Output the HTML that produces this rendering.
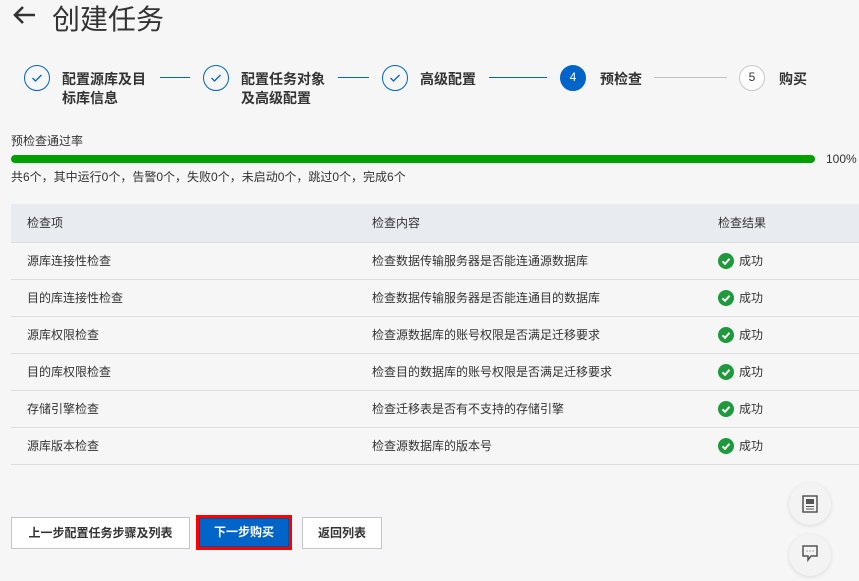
<!DOCTYPE html>
<html><head><meta charset="utf-8"><style>
*{margin:0;padding:0;box-sizing:border-box}
body{width:859px;height:566px;overflow:hidden;background:#f6f6f6;font-family:"Liberation Sans","Noto Sans CJK SC",sans-serif;color:#333;position:relative}
.a{position:absolute}
.title{left:52px;top:-2px;font-size:28px;color:#333;font-weight:400}
.c{width:26px;height:26px;border-radius:50%;border:1.5px solid #0064c8;color:#0064c8;text-align:center;font-size:12px;line-height:23px}
.lbl{font-size:14px;font-weight:bold;color:#333;line-height:19px}
.ln{height:1px;background:#0064c8;top:77px}
.t{font-size:12px;color:#333}
.row{left:11px;width:848px;height:37px;border-bottom:1px solid #ddd;font-size:12px;line-height:37px}
.row span{position:absolute}
.ok{display:inline-block;width:16px;height:16px;border-radius:50%;background:#1e9a3c;vertical-align:middle;margin-right:5px;position:relative;top:-1px}
.ok svg{display:block;position:absolute;left:0;top:0}
.btn{top:517px;height:32px;border:1px solid #c4c6cc;background:#fff;font-size:12px;font-weight:bold;text-align:center;line-height:30px}
.fl{width:42px;height:42px;border-radius:50%;background:#f3f3f3;box-shadow:0 1px 4px rgba(0,0,0,.12)}
</style></head><body>
<svg class="a" style="left:12px;top:4px" width="24" height="22" viewBox="0 0 24 22"><path d="M23 11H3M11 3L3 11l8 8" stroke="#333" stroke-width="2.6" fill="none"/></svg>
<div class="a title">创建任务</div>

<div class="a c" style="left:24px;top:65px"><svg width="12" height="10" viewBox="0 0 12 10" style="margin-top:7px"><path d="M1.5 5l3 3 6-6" stroke="#0064c8" stroke-width="1.3" fill="none"/></svg></div>
<div class="a lbl" style="left:62px;top:70px">配置源库及目<br>标库信息</div>
<div class="a ln" style="left:160px;width:30px"></div>
<div class="a c" style="left:203px;top:65px"><svg width="12" height="10" viewBox="0 0 12 10" style="margin-top:7px"><path d="M1.5 5l3 3 6-6" stroke="#0064c8" stroke-width="1.3" fill="none"/></svg></div>
<div class="a lbl" style="left:241px;top:70px">配置任务对象<br>及高级配置</div>
<div class="a ln" style="left:338px;width:31px"></div>
<div class="a c" style="left:382px;top:65px"><svg width="12" height="10" viewBox="0 0 12 10" style="margin-top:7px"><path d="M1.5 5l3 3 6-6" stroke="#0064c8" stroke-width="1.3" fill="none"/></svg></div>
<div class="a lbl" style="left:420px;top:70px">高级配置</div>
<div class="a ln" style="left:489px;width:58px"></div>
<div class="a c" style="left:560px;top:65px;background:#0064c8;color:#fff">4</div>
<div class="a lbl" style="left:600px;top:70px">预检查</div>
<div class="a ln" style="left:654px;width:73px;background:#c0c0c0"></div>
<div class="a c" style="left:739px;top:65px;border-color:#c8c8c8;color:#333;background:#fff">5</div>
<div class="a lbl" style="left:779px;top:70px">购买</div>

<div class="a t" style="left:11px;top:132px">预检查通过率</div>
<div class="a" style="left:11px;top:155px;width:804px;height:8px;border-radius:4px;background:#00a000"></div>
<div class="a t" style="left:826px;top:152px">100%</div>
<div class="a t" style="left:11px;top:168px">共6个，其中运行0个，告警0个，失败0个，未启动0个，跳过0个，完成6个</div>

<div class="a row" style="top:204px;height:39px;line-height:39px;background:#e8ebf0"><span style="left:16px">检查项</span><span style="left:361px">检查内容</span><span style="left:707px">检查结果</span></div>
<div class="a row" style="top:243px"><span style="left:16px">源库连接性检查</span><span style="left:361px">检查数据传输服务器是否能连通源数据库</span><span style="left:707px"><i class="ok"><svg width="16" height="16"><path d="M4.5 8.3l2.5 2.5 4.5-5" stroke="#fff" stroke-width="2" fill="none"/></svg></i>成功</span></div>
<div class="a row" style="top:280px"><span style="left:16px">目的库连接性检查</span><span style="left:361px">检查数据传输服务器是否能连通目的数据库</span><span style="left:707px"><i class="ok"><svg width="16" height="16"><path d="M4.5 8.3l2.5 2.5 4.5-5" stroke="#fff" stroke-width="2" fill="none"/></svg></i>成功</span></div>
<div class="a row" style="top:317px"><span style="left:16px">源库权限检查</span><span style="left:361px">检查源数据库的账号权限是否满足迁移要求</span><span style="left:707px"><i class="ok"><svg width="16" height="16"><path d="M4.5 8.3l2.5 2.5 4.5-5" stroke="#fff" stroke-width="2" fill="none"/></svg></i>成功</span></div>
<div class="a row" style="top:354px"><span style="left:16px">目的库权限检查</span><span style="left:361px">检查目的数据库的账号权限是否满足迁移要求</span><span style="left:707px"><i class="ok"><svg width="16" height="16"><path d="M4.5 8.3l2.5 2.5 4.5-5" stroke="#fff" stroke-width="2" fill="none"/></svg></i>成功</span></div>
<div class="a row" style="top:391px"><span style="left:16px">存储引擎检查</span><span style="left:361px">检查迁移表是否有不支持的存储引擎</span><span style="left:707px"><i class="ok"><svg width="16" height="16"><path d="M4.5 8.3l2.5 2.5 4.5-5" stroke="#fff" stroke-width="2" fill="none"/></svg></i>成功</span></div>
<div class="a row" style="top:428px"><span style="left:16px">源库版本检查</span><span style="left:361px">检查源数据库的版本号</span><span style="left:707px"><i class="ok"><svg width="16" height="16"><path d="M4.5 8.3l2.5 2.5 4.5-5" stroke="#fff" stroke-width="2" fill="none"/></svg></i>成功</span></div>

<div class="a btn" style="left:11px;width:179px">上一步配置任务步骤及列表</div>
<div class="a btn" style="left:196px;width:96px;height:35px;top:515px;border:3px solid #f00;background:#0064c8;color:#fff;line-height:29px;box-shadow:inset 0 0 0 1px #0050a0">下一步购买</div>
<div class="a btn" style="left:302px;width:80px">返回列表</div>

<div class="a fl" style="left:789px;top:483px"><svg width="42" height="42"><rect x="14" y="13" width="14" height="16" fill="none" stroke="#555" stroke-width="1.5"/><rect x="17" y="16" width="8" height="5" fill="#555"/><path d="M17 23.5h8M17 26h8" stroke="#555"/></svg></div>
<div class="a fl" style="left:789px;top:534px"><svg width="42" height="42"><path d="M14 12h14v10h-6l-3 4v-4h-5z" fill="none" stroke="#555" stroke-width="1.5"/><path d="M17.5 17h1M20.5 17h1M23.5 17h1" stroke="#555"/></svg></div>
</body></html>
